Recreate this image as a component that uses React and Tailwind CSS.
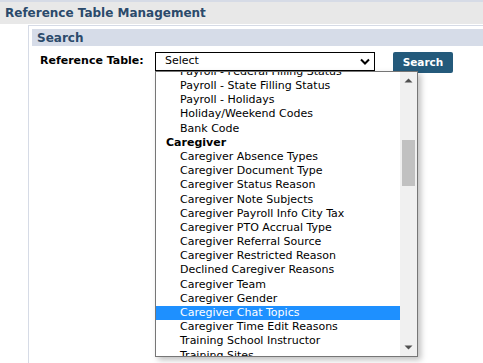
export default function App() {
  const items = [
    { label: "Payroll - Federal Filling Status" },
    { label: "Payroll - State Filling Status" },
    { label: "Payroll - Holidays" },
    { label: "Holiday/Weekend Codes" },
    { label: "Bank Code" },
    { label: "Caregiver", group: true },
    { label: "Caregiver Absence Types" },
    { label: "Caregiver Document Type" },
    { label: "Caregiver Status Reason" },
    { label: "Caregiver Note Subjects" },
    { label: "Caregiver Payroll Info City Tax" },
    { label: "Caregiver PTO Accrual Type" },
    { label: "Caregiver Referral Source" },
    { label: "Caregiver Restricted Reason" },
    { label: "Declined Caregiver Reasons" },
    { label: "Caregiver Team" },
    { label: "Caregiver Gender" },
    { label: "Caregiver Chat Topics", selected: true },
    { label: "Caregiver Time Edit Reasons" },
    { label: "Training School Instructor" },
    { label: "Training Sites" },
  ];

  return (
    <div className="w-[483px] h-[363px] bg-white relative overflow-hidden font-['DejaVu_Sans',Verdana,sans-serif]">
      <div className="h-[2px] bg-[#d6dbe6]" />
      <div className="h-[22px] bg-[#e8e8e8] pl-[5px] flex items-center text-[12px] font-bold text-[#2b4a6b]">
        Reference Table Management
      </div>
      <div className="h-[1px]" />
      <div className="ml-[28px] border-t border-l border-[#d6dbe6] pt-[3px] pl-[3px] h-[400px]">
        <div className="h-[17px] bg-[#d6dce8] pl-[5px] flex items-center text-[12px] font-bold text-[#2b4a6b]">
          Search
        </div>
        <div className="flex items-start mt-[6px] pl-[8px]">
          <div className="w-[115px] h-[19px] flex items-center text-[11px] font-bold text-black">
            Reference Table:
          </div>
          <div className="w-[220px] h-[19px] border border-black flex items-center justify-between pl-[9px] pr-[4px] text-[11px] text-black">
            <span>Select</span>
            <svg width="10" height="7" viewBox="0 0 10 7">
              <path d="M1 1.5 L5 5.5 L9 1.5" fill="none" stroke="#000" strokeWidth="2" />
            </svg>
          </div>
          <button className="ml-[18px] w-[60px] h-[21px] rounded-[2px] bg-[#245a7b] text-white text-[10.5px] font-bold flex items-center justify-center">
            Search
          </button>
        </div>
      </div>

      <div className="absolute left-[155px] top-[71px] w-[263px] h-[286px] bg-white border border-[#767676] shadow-[3px_3px_6px_rgba(0,0,0,0.25)] overflow-hidden flex">
        <div className="flex-1 overflow-hidden">
          <div className="mt-[-7px]">
            {items.map((it) => (
              <div
                key={it.label}
                className={
                  "h-[14.2px] flex items-center text-[11px] whitespace-nowrap " +
                  (it.group ? "pl-[10px] font-bold text-black" : "pl-[24px] text-black") +
                  (it.selected ? " bg-[#1e90ff] text-white" : "")
                }
              >
                {it.label}
              </div>
            ))}
          </div>
        </div>
        <div className="w-[17px] bg-[#f0f0f0] relative">
          <svg className="absolute left-[4px] top-[6px]" width="9" height="5" viewBox="0 0 9 5">
            <path d="M0.5 4.5 L4.5 0.5 L8.5 4.5 Z" fill="#505050" />
          </svg>
          <div className="absolute left-[2px] top-[68px] w-[13px] h-[46px] bg-[#c1c1c1]" />
          <svg className="absolute left-[4px] bottom-[6px]" width="9" height="5" viewBox="0 0 9 5">
            <path d="M0.5 0.5 L4.5 4.5 L8.5 0.5 Z" fill="#505050" />
          </svg>
        </div>
      </div>
    </div>
  );
}
